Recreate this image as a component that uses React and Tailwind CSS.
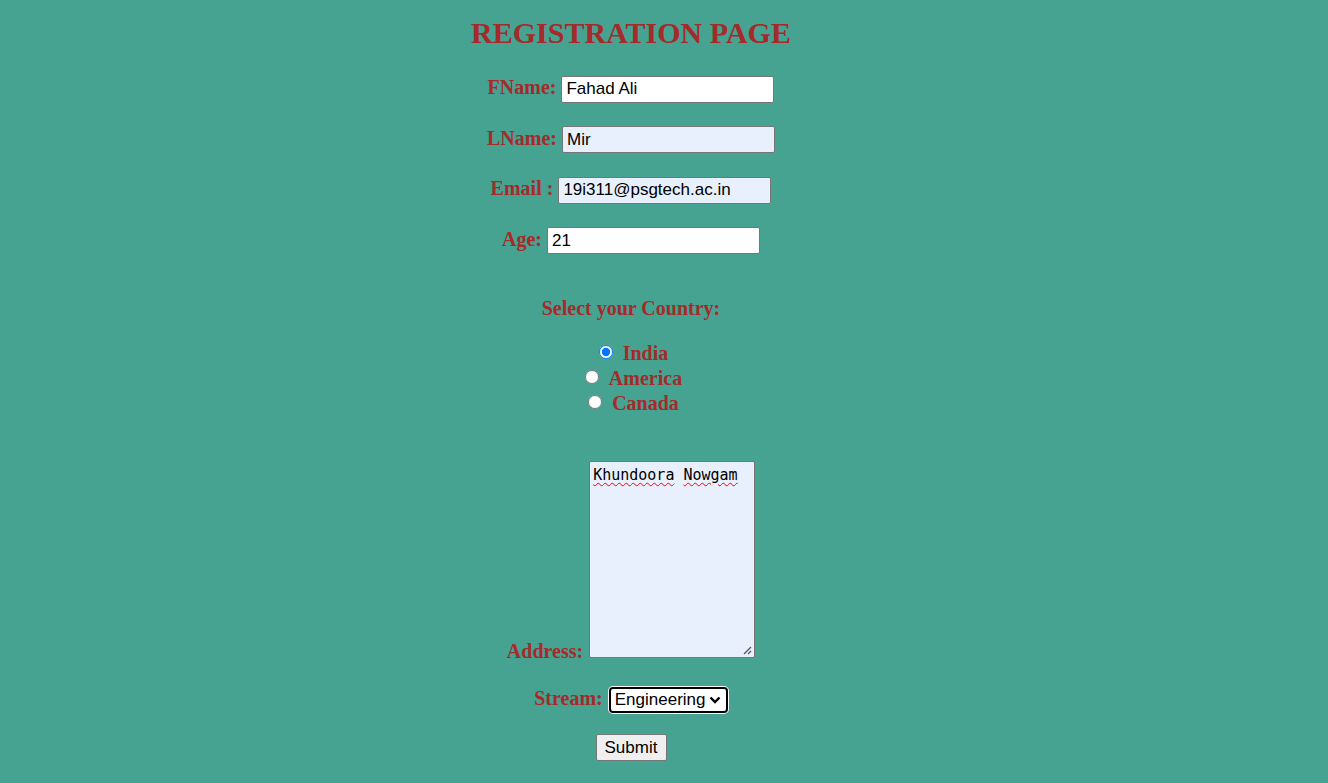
import React from "react";

const serif = { fontFamily: '"Liberation Serif", "Times New Roman", serif' };
const sans = { fontFamily: '"Liberation Sans", Arial, sans-serif' };

function Field({ label, value, bg, mt }) {
  return (
    <div className={`flex items-baseline gap-[5px] ${mt}`}>
      <span className="text-[20px] font-bold text-[#a52a2a] leading-[24px]" style={serif}>
        {label}
      </span>
      <input
        defaultValue={value}
        className={`w-[213px] h-[27px] border border-[#767676] rounded-[2px] px-[4px] py-[1px] text-[17px] text-black outline-none ${bg}`}
        style={sans}
      />
    </div>
  );
}

function Radio({ label, checked, mt }) {
  return (
    <div className={`flex items-center h-[25px] ${mt || ""}`}>
      <input
        type="radio"
        name="country"
        defaultChecked={checked}
        className="w-[14px] h-[14px] ml-[5px] mr-[3px] mt-[-4px] m-0"
      />
      <span className="ml-[7px] text-[20px] font-bold text-[#a52a2a] leading-[25px]" style={serif}>
        {label}
      </span>
    </div>
  );
}

export default function App() {
  return (
    <div className="min-h-[783px] w-full bg-[#46a291]">
      <div className="w-[1262px] flex flex-col items-center pt-[16px]">
        <h1 className="text-[30px] font-bold text-[#a52a2a] leading-[34px]" style={serif}>
          REGISTRATION PAGE
        </h1>
        <Field label="FName:" value="Fahad Ali" bg="bg-white" mt="mt-[25px]" />
        <Field label="LName:" value="Mir" bg="bg-[#e8f0fe]" mt="mt-[23px]" />
        <Field label="Email :" value="19i311@psgtech.ac.in" bg="bg-[#e8f0fe]" mt="mt-[23px]" />
        <Field label="Age:" value="21" bg="bg-white" mt="mt-[23px]" />

        <div className="mt-[42px] text-[20px] font-bold text-[#a52a2a] leading-[24px]" style={serif}>
          Select your Country:
        </div>

        <div className="mt-[21px] flex flex-col items-center">
          <Radio label="India" checked />
          <Radio label="America" />
          <Radio label="Canada" />
        </div>

        <div className="mt-[45px] flex items-end gap-[6px]">
          <span className="text-[20px] font-bold text-[#a52a2a] leading-[20px] mb-[-3px]" style={serif}>
            Address:
          </span>
          <div className="relative w-[166px] h-[197px] bg-[#e8f0fe] border border-[#767676] rounded-[2px] pt-[4px] px-[3px]">
            <div
              className="text-[15px] text-black leading-[18px] whitespace-pre"
              style={{ fontFamily: '"DejaVu Sans Mono", "Liberation Mono", monospace' }}
            >
              <span className="underline decoration-wavy decoration-[#ff0000] decoration-1 underline-offset-[2px]">Khundoora</span>
              {" "}
              <span className="underline decoration-wavy decoration-[#ff0000] decoration-1 underline-offset-[2px]">Nowgam</span>
            </div>
            <svg className="absolute right-[2px] bottom-[2px]" width="10" height="10" viewBox="0 0 10 10">
              <line x1="9" y1="2" x2="2" y2="9" stroke="#555" strokeWidth="1.2" />
              <line x1="9" y1="6" x2="6" y2="9" stroke="#555" strokeWidth="1.2" />
            </svg>
          </div>
        </div>

        <div className="mt-[28px] flex items-baseline gap-[6px]">
          <span className="text-[20px] font-bold text-[#a52a2a] leading-[24px]" style={serif}>
            Stream:
          </span>
          <div
            className="w-[119px] h-[26px] flex items-center bg-white border-2 border-black rounded-[4px] shadow-[0_0_0_1px_#ffffff] pl-[4px] pr-[5px] text-[17px] text-black"
            style={sans}
          >
            <span className="flex-1 leading-[20px]">Engineering</span>
            <svg width="12" height="8" viewBox="0 0 12 8">
              <polyline points="1.5,1.5 6,6 10.5,1.5" fill="none" stroke="#000" strokeWidth="2.4" />
            </svg>
          </div>
        </div>

        <button
          className="mt-[21px] w-[71px] h-[27px] bg-[#efefef] border border-[#767676] rounded-[2px] text-[17px] text-black"
          style={sans}
        >
          Submit
        </button>
      </div>
    </div>
  );
}
